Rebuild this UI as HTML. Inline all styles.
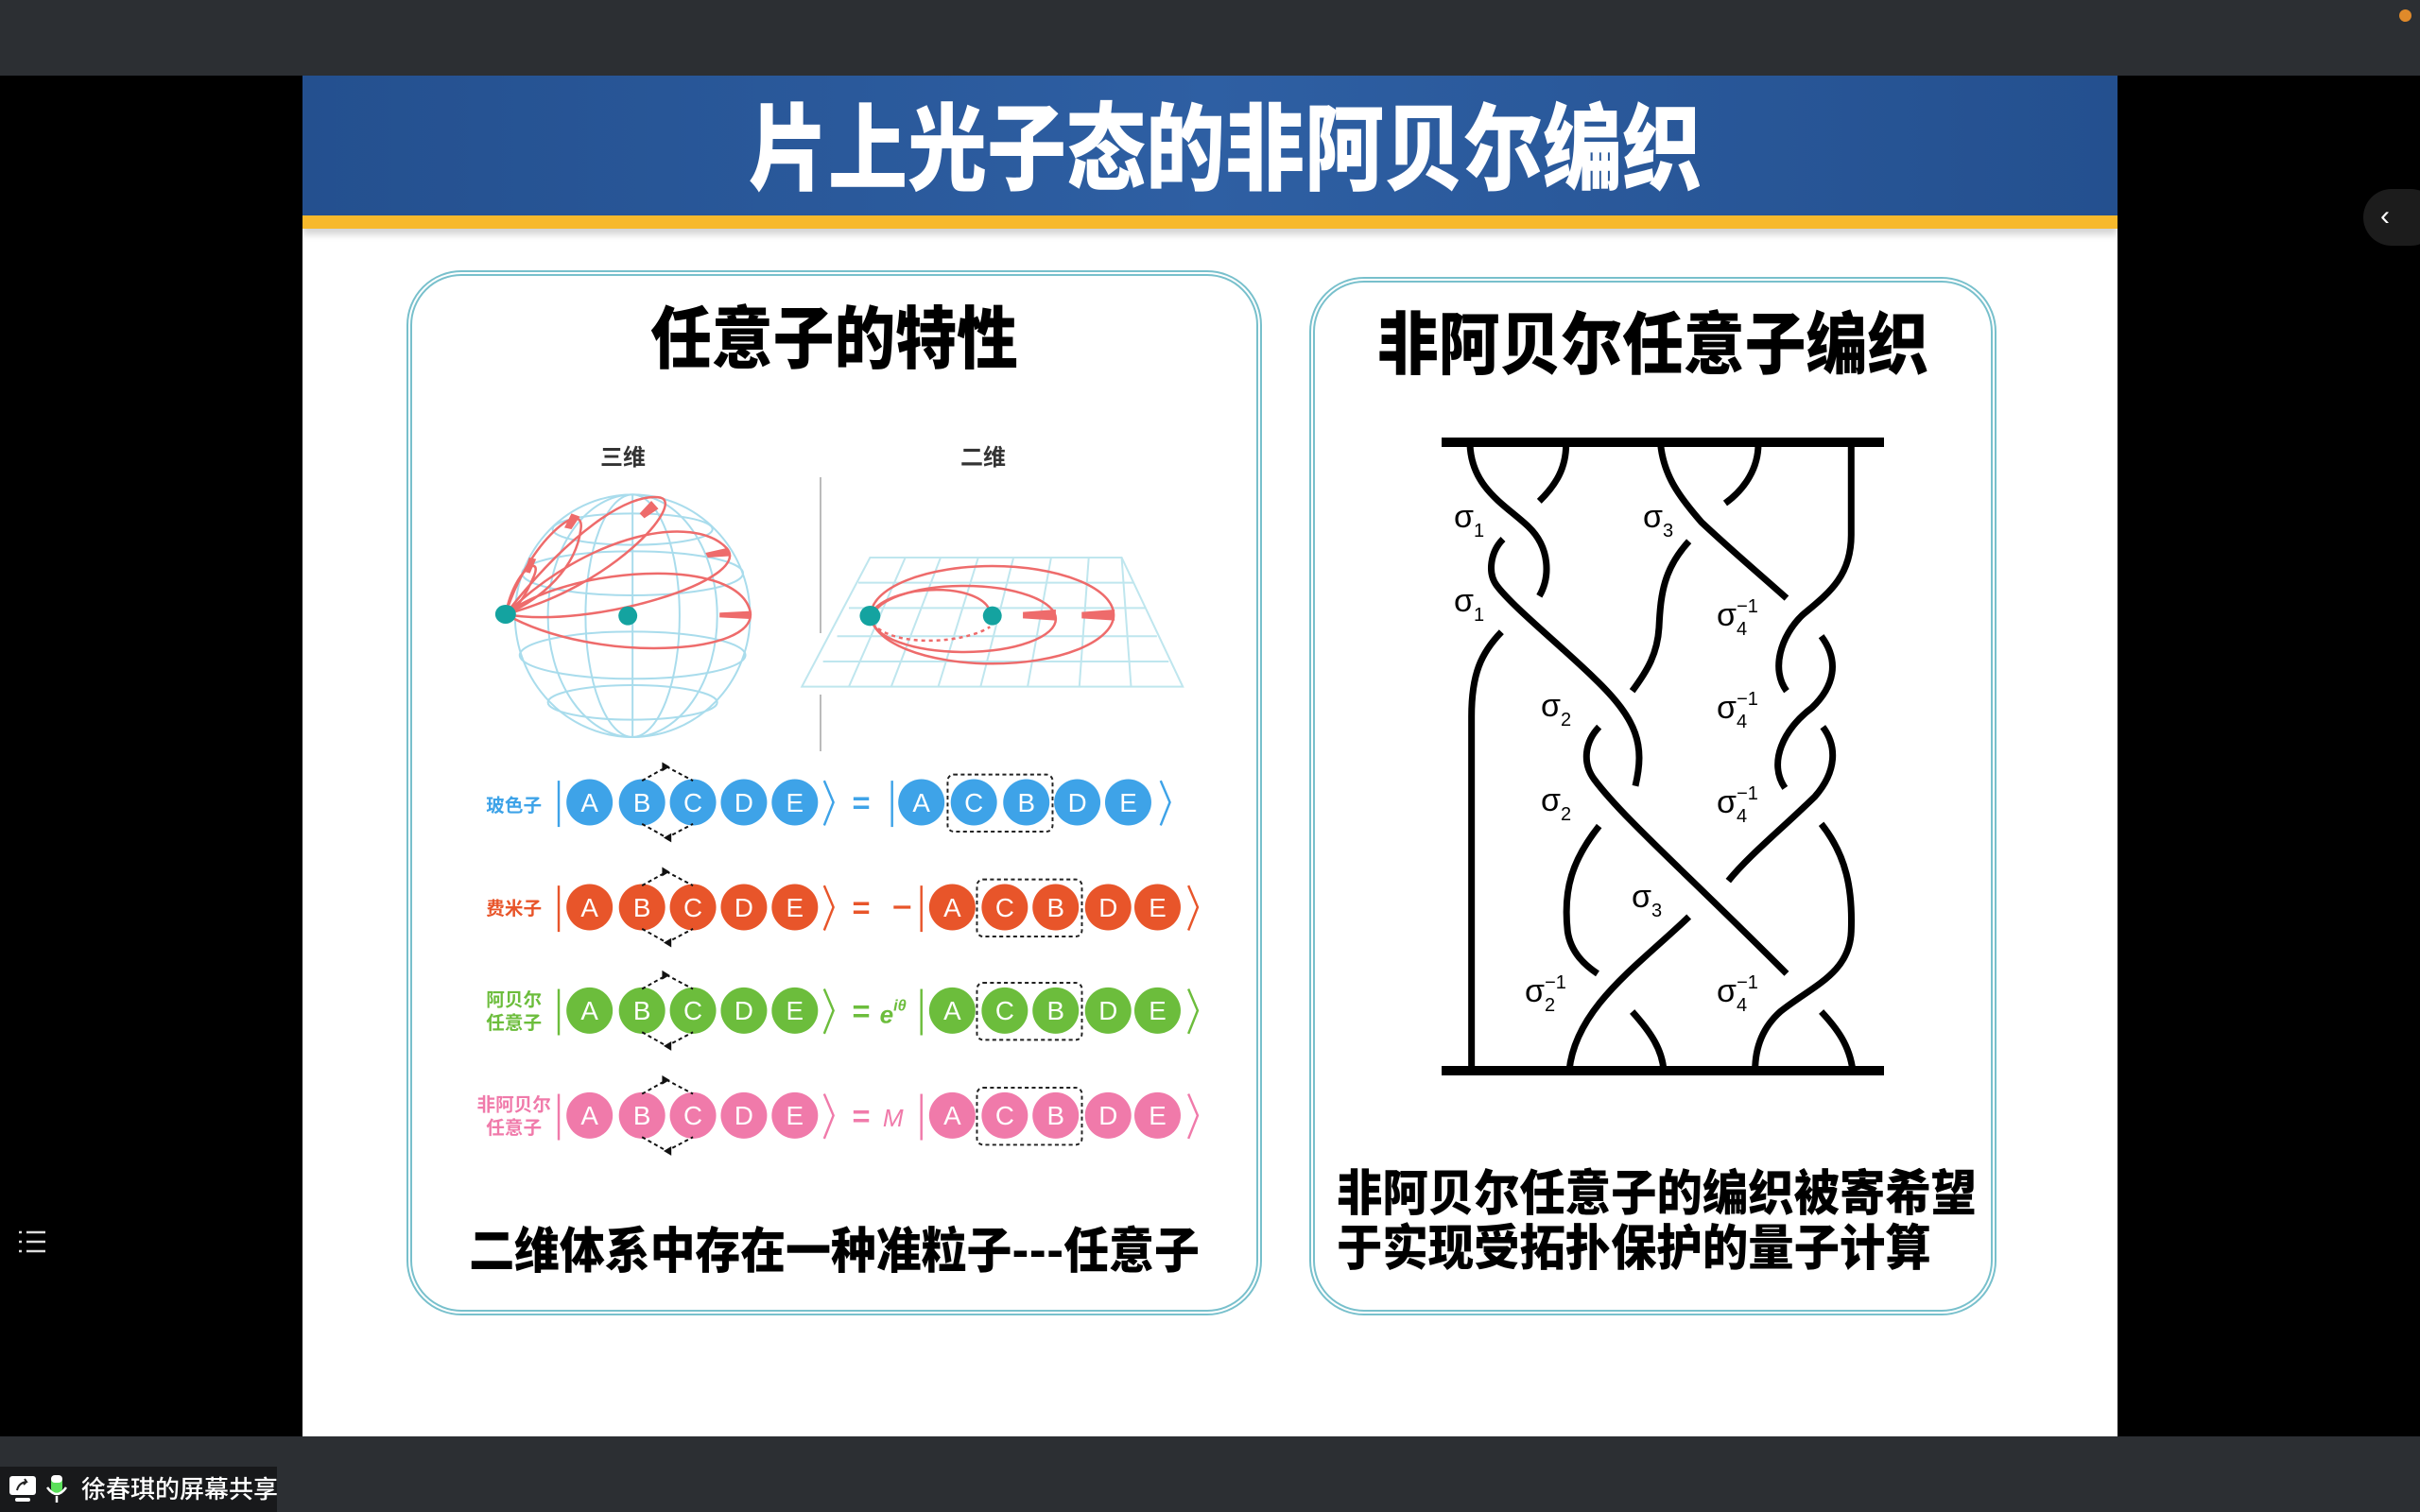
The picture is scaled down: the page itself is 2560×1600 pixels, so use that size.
<!DOCTYPE html>
<html><head><meta charset="utf-8"><style>
*{margin:0;padding:0;box-sizing:border-box}
body{width:2560px;height:1600px;overflow:hidden;background:#000;position:relative;font-family:"Liberation Sans","Noto Sans CJK SC",sans-serif}
.abs{position:absolute}
.cn{font-family:"Noto Sans CJK SC","WenQuanYi Zen Hei",sans-serif;font-weight:900}
</style></head><body>
<div class="abs" style="left:0;top:0;width:2560px;height:80px;background:#2c2f33"></div>
<div class="abs" style="left:2538px;top:10px;width:13px;height:13px;border-radius:50%;background:#e08a2a"></div>
<div class="abs" style="left:2500px;top:200px;width:80px;height:60px;border-radius:30px;background:#1c1c1c;color:#fff;font-size:30px;line-height:58px;padding-left:18px">‹</div>
<div class="abs" style="left:0;top:1520px;width:2560px;height:80px;background:#2c2f33"></div>
<div class="abs" style="left:0;top:1552px;width:293px;height:48px;background:#18191b"></div>
<div class="abs cn" style="left:86px;top:1557px;color:#fff;font-size:26px;font-weight:500;line-height:36px">徐春琪的屏幕共享</div>
<svg class="abs" style="left:0;top:1552px" width="80" height="48">
<rect x="10" y="10" width="28" height="20" rx="3" fill="#fff"/><rect x="16" y="33" width="16" height="4" rx="2" fill="#fff"/>
<path d="M18 25 Q20 17 28 16 L26 13 M28 16 L25 19" stroke="#222" stroke-width="2" fill="none"/>
<rect x="54" y="9" width="12" height="20" rx="6" fill="#5be05b"/><rect x="54" y="9" width="12" height="8" rx="4" fill="#fff"/>
<path d="M50 22 Q60 36 70 22 M60 31 V38" stroke="#fff" stroke-width="2.5" fill="none"/>
</svg>
<svg class="abs" style="left:16px;top:1298px" width="40" height="36"><g stroke="#ddd" stroke-width="2.5"><path d="M12 6h20M12 16h20M12 26h20"/><path d="M4 6h3M4 16h3M4 26h3"/></g></svg>

<div class="abs" style="left:320px;top:80px;width:1920px;height:1440px;background:#fff"></div>
<div class="abs" style="left:320px;top:80px;width:1920px;height:150px;background:linear-gradient(90deg,#24508f,#2e5fa3 50%,#24508f)"></div>
<div class="abs" style="left:320px;top:228px;width:1920px;height:14px;background:#f7b92c;box-shadow:0 6px 8px rgba(0,0,0,.18)"></div>
<div class="abs cn" style="left:336px;top:90px;width:1920px;text-align:center;color:#fff;font-size:100px;line-height:120px;transform:scaleX(.84)">片上光子态的非阿贝尔编织</div>

<div class="abs" style="left:430px;top:286px;width:905px;height:1106px;border:6px double #78c0cc;border-radius:58px"></div>
<div class="abs" style="left:1385px;top:293px;width:727px;height:1099px;border:6px double #78c0cc;border-radius:58px"></div>
<div class="abs cn" style="left:431px;top:308px;width:903px;text-align:center;font-size:72px;line-height:90px;color:#000;transform:scaleX(.9)">任意子的特性</div>
<div class="abs cn" style="left:1386px;top:314px;width:725px;text-align:center;font-size:72px;line-height:90px;color:#000;transform:scaleX(.9)">非阿贝尔任意子编织</div>
<div class="abs cn" style="left:431px;top:1288px;width:903px;text-align:center;font-size:52px;line-height:64px;color:#000;transform:scaleX(.92)">二维体系中存在一种准粒子---任意子</div>
<div class="abs cn" style="left:1414px;top:1230px;width:720px;font-size:52px;line-height:58px;color:#000;transform:scaleX(.93);transform-origin:0 0;white-space:nowrap">非阿贝尔任意子的编织被寄希望<br>于实现受拓扑保护的量子计算</div>

<svg class="abs" style="left:0;top:0" width="2560" height="1600" viewBox="0 0 2560 1600">
<text x="659" y="492" font-size="24" text-anchor="middle" fill="#333" font-family="Noto Sans CJK SC,sans-serif" font-weight="700">三维</text>
<text x="1040" y="492" font-size="24" text-anchor="middle" fill="#333" font-family="Noto Sans CJK SC,sans-serif" font-weight="700">二维</text>
<line x1="868" y1="505" x2="868" y2="670" stroke="#bbb" stroke-width="2"/>
<line x1="868" y1="735" x2="868" y2="795" stroke="#bbb" stroke-width="2"/>
<g transform="translate(500,460) scale(0.4975,0.3333)" fill="none">
 <g stroke="#a9dcec" stroke-width="2">
  <ellipse cx="340" cy="575" rx="250" ry="385" vector-effect="non-scaling-stroke"/>
  <ellipse cx="340" cy="575" rx="180" ry="385" vector-effect="non-scaling-stroke"/>
  <ellipse cx="340" cy="575" rx="100" ry="385" vector-effect="non-scaling-stroke"/>
  <line x1="340" y1="190" x2="340" y2="960" vector-effect="non-scaling-stroke"/>
  <ellipse cx="340" cy="300" rx="170" ry="50" vector-effect="non-scaling-stroke"/>
  <ellipse cx="340" cy="440" rx="235" ry="70" vector-effect="non-scaling-stroke"/>
  <ellipse cx="340" cy="700" rx="240" ry="75" vector-effect="non-scaling-stroke"/>
  <ellipse cx="340" cy="850" rx="180" ry="55" vector-effect="non-scaling-stroke"/>
 </g>
 <g stroke="#ee6b6b" stroke-width="2.5">
  <path d="M70 570 C90 420 150 380 130 450 C110 520 90 560 70 570" vector-effect="non-scaling-stroke"/>
  <path d="M70 570 C120 330 240 200 230 300 C220 420 150 520 70 570" vector-effect="non-scaling-stroke"/>
  <path d="M70 570 C200 320 330 180 400 200 C450 220 300 480 70 570" vector-effect="non-scaling-stroke"/>
  <path d="M70 570 C250 310 470 250 540 360 C600 460 250 620 70 570" vector-effect="non-scaling-stroke"/>
  <path d="M70 570 C200 420 560 380 590 560 C610 700 260 730 70 570" vector-effect="non-scaling-stroke"/>
 </g>
 <g fill="#ee6b6b"><path d="M380 210 L395 235 L365 265 L355 250 Z"/><path d="M210 250 L228 260 L210 300 L195 295 Z"/><path d="M540 360 L550 385 L500 390 L495 375Z"/><path d="M590 560 L590 585 L525 580 L525 565Z"/><path d="M120 390 L135 395 L122 440 L110 435Z"/></g>
 <ellipse cx="70" cy="570" rx="22" ry="30" fill="#14a3a0"/>
 <ellipse cx="330" cy="575" rx="20" ry="30" fill="#14a3a0"/>
 <g stroke="#bfe6ee" stroke-width="2">
  <path d="M845 390 H1380 L1510 800 H700 Z" vector-effect="non-scaling-stroke"/>
  <path d="M820 470H1405M800 550H1430M775 640H1455M745 720H1480" vector-effect="non-scaling-stroke"/>
  <path d="M920 390L800 800M995 390L890 800M1075 390L990 800M1150 390L1080 800M1230 390L1180 800M1310 390L1290 800M1380 390L1400 800" vector-effect="non-scaling-stroke"/>
 </g>
 <g stroke="#ee6b6b" stroke-width="2.5">
  <ellipse cx="1105" cy="572" rx="258" ry="155" vector-effect="non-scaling-stroke"/>
  <ellipse cx="1045" cy="585" rx="195" ry="105" vector-effect="non-scaling-stroke"/>
  <path d="M850 560 C900 470 1080 470 1100 560" vector-effect="non-scaling-stroke"/>
  <path d="M850 600 C900 680 1050 660 1100 610" stroke-dasharray="4 4" vector-effect="non-scaling-stroke"/>
 </g>
 <g fill="#ee6b6b"><path d="M1240 555V590L1170 583V563Z"/><path d="M1365 555V590L1295 583V563Z"/></g>
 <ellipse cx="845" cy="575" rx="22" ry="32" fill="#14a3a0"/>
 <ellipse cx="1105" cy="575" rx="20" ry="30" fill="#14a3a0"/>
</g>

<g transform="scale(1.63265)" font-family="Liberation Sans,sans-serif">
 <defs>
  <g id="arr" fill="none" stroke="#111" stroke-width="1.2" stroke-dasharray="2.5 2">
   <path d="M416 506 L432 497 L449 506"/><path d="M416 534 L432 543 L449 534"/>
  </g>
 </defs>
 <g fill="#3ea3e8" stroke="#3ea3e8">
  <text x="333" y="526" font-size="12" text-anchor="middle" stroke="none" font-family="Noto Sans CJK SC,sans-serif" font-weight="700">玻色子</text>
  <line x1="362" y1="506" x2="362" y2="536" stroke-width="1.5"/>
  <g stroke="none"><circle cx="382" cy="520" r="15"/><circle cx="416" cy="520" r="15"/><circle cx="449" cy="520" r="15"/><circle cx="482" cy="520" r="15"/><circle cx="515" cy="520" r="15"/>
  <circle cx="597" cy="520" r="15"/><circle cx="631" cy="520" r="15"/><circle cx="665" cy="520" r="15"/><circle cx="698" cy="520" r="15"/><circle cx="731" cy="520" r="15"/></g>
  <path d="M534 506 L540 520 L534 535" fill="none" stroke-width="1.5"/>
  <path d="M752 506 L758 520 L752 535" fill="none" stroke-width="1.5"/>
  <line x1="578" y1="506" x2="578" y2="536" stroke-width="1.5"/>
  <text x="558" y="527" font-size="20" text-anchor="middle" stroke="none" font-weight="700">=</text>
 </g>
 <g fill="#e8552a" stroke="#e8552a">
  <text x="333" y="593" font-size="12" text-anchor="middle" stroke="none" font-family="Noto Sans CJK SC,sans-serif" font-weight="700">费米子</text>
  <line x1="362" y1="574" x2="362" y2="604" stroke-width="1.5"/>
  <g stroke="none"><circle cx="382" cy="588" r="15"/><circle cx="416" cy="588" r="15"/><circle cx="449" cy="588" r="15"/><circle cx="482" cy="588" r="15"/><circle cx="515" cy="588" r="15"/>
  <circle cx="617" cy="588" r="15"/><circle cx="651" cy="588" r="15"/><circle cx="684" cy="588" r="15"/><circle cx="718" cy="588" r="15"/><circle cx="750" cy="588" r="15"/></g>
  <path d="M534 574 L540 588 L534 603" fill="none" stroke-width="1.5"/>
  <path d="M770 574 L776 588 L770 603" fill="none" stroke-width="1.5"/>
  <line x1="597" y1="574" x2="597" y2="604" stroke-width="1.5"/>
  <text x="558" y="595" font-size="20" text-anchor="middle" stroke="none" font-weight="700">=</text>
  <line x1="579" y1="588" x2="590" y2="588" stroke-width="2"/>
 </g>
 <g fill="#6cbd3c" stroke="#6cbd3c">
  <text x="333" y="652" font-size="12" text-anchor="middle" stroke="none" font-family="Noto Sans CJK SC,sans-serif" font-weight="700">阿贝尔</text>
  <text x="333" y="667" font-size="12" text-anchor="middle" stroke="none" font-family="Noto Sans CJK SC,sans-serif" font-weight="700">任意子</text>
  <line x1="362" y1="641" x2="362" y2="671" stroke-width="1.5"/>
  <g stroke="none"><circle cx="382" cy="655" r="15"/><circle cx="416" cy="655" r="15"/><circle cx="449" cy="655" r="15"/><circle cx="482" cy="655" r="15"/><circle cx="515" cy="655" r="15"/>
  <circle cx="617" cy="655" r="15"/><circle cx="651" cy="655" r="15"/><circle cx="684" cy="655" r="15"/><circle cx="718" cy="655" r="15"/><circle cx="750" cy="655" r="15"/></g>
  <path d="M534 641 L540 655 L534 670" fill="none" stroke-width="1.5"/>
  <path d="M770 641 L776 655 L770 670" fill="none" stroke-width="1.5"/>
  <line x1="597" y1="641" x2="597" y2="671" stroke-width="1.5"/>
  <text x="558" y="662" font-size="20" text-anchor="middle" stroke="none" font-weight="700">=</text>
  <text x="570" y="663" font-size="16" stroke="none" font-style="italic" font-weight="700">e<tspan font-size="10" dy="-8">iθ</tspan></text>
 </g>
 <g fill="#f07aaa" stroke="#f07aaa">
  <text x="333" y="720" font-size="12" text-anchor="middle" stroke="none" font-family="Noto Sans CJK SC,sans-serif" font-weight="700">非阿贝尔</text>
  <text x="333" y="735" font-size="12" text-anchor="middle" stroke="none" font-family="Noto Sans CJK SC,sans-serif" font-weight="700">任意子</text>
  <line x1="362" y1="709" x2="362" y2="739" stroke-width="1.5"/>
  <g stroke="none"><circle cx="382" cy="723" r="15"/><circle cx="416" cy="723" r="15"/><circle cx="449" cy="723" r="15"/><circle cx="482" cy="723" r="15"/><circle cx="515" cy="723" r="15"/>
  <circle cx="617" cy="723" r="15"/><circle cx="651" cy="723" r="15"/><circle cx="684" cy="723" r="15"/><circle cx="718" cy="723" r="15"/><circle cx="750" cy="723" r="15"/></g>
  <path d="M534 709 L540 723 L534 738" fill="none" stroke-width="1.5"/>
  <path d="M770 709 L776 723 L770 738" fill="none" stroke-width="1.5"/>
  <line x1="597" y1="709" x2="597" y2="739" stroke-width="1.5"/>
  <text x="558" y="730" font-size="20" text-anchor="middle" stroke="none" font-weight="700">=</text>
  <text x="572" y="730" font-size="16" stroke="none" font-style="italic">M</text>
 </g>
 <g fill="#fff" font-size="17" text-anchor="middle">
  <text x="382" y="526">A</text><text x="416" y="526">B</text><text x="449" y="526">C</text><text x="482" y="526">D</text><text x="515" y="526">E</text>
  <text x="597" y="526">A</text><text x="631" y="526">C</text><text x="665" y="526">B</text><text x="698" y="526">D</text><text x="731" y="526">E</text>
  <text x="382" y="594">A</text><text x="416" y="594">B</text><text x="449" y="594">C</text><text x="482" y="594">D</text><text x="515" y="594">E</text>
  <text x="617" y="594">A</text><text x="651" y="594">C</text><text x="684" y="594">B</text><text x="718" y="594">D</text><text x="750" y="594">E</text>
  <text x="382" y="661">A</text><text x="416" y="661">B</text><text x="449" y="661">C</text><text x="482" y="661">D</text><text x="515" y="661">E</text>
  <text x="617" y="661">A</text><text x="651" y="661">C</text><text x="684" y="661">B</text><text x="718" y="661">D</text><text x="750" y="661">E</text>
  <text x="382" y="729">A</text><text x="416" y="729">B</text><text x="449" y="729">C</text><text x="482" y="729">D</text><text x="515" y="729">E</text>
  <text x="617" y="729">A</text><text x="651" y="729">C</text><text x="684" y="729">B</text><text x="718" y="729">D</text><text x="750" y="729">E</text>
 </g>
 <use href="#arr"/><use href="#arr" y="68"/><use href="#arr" y="135"/><use href="#arr" y="203"/>
 <g fill="#111"><path d="M434 497l-5 -3v6z"/><path d="M430 543l5 -3v6z"/><path d="M434 565l-5 -3v6z"/><path d="M430 611l5 -3v6z"/><path d="M434 632l-5 -3v6z"/><path d="M430 678l5 -3v6z"/><path d="M434 700l-5 -3v6z"/><path d="M430 746l5 -3v6z"/></g>
 <g fill="none" stroke="#222" stroke-width="1.2" stroke-dasharray="2.5 2">
  <rect x="614" y="502" width="68" height="37" rx="4"/>
  <rect x="633" y="570" width="68" height="37" rx="4"/>
  <rect x="633" y="637" width="68" height="37" rx="4"/>
  <rect x="633" y="705" width="68" height="37" rx="4"/>
 </g>
</g>

<rect x="1525" y="463" width="468" height="10" fill="#000"/>
<rect x="1525" y="1128" width="468" height="10" fill="#000"/>
<g transform="translate(1500,450) scale(0.3333,0.4464)" fill="none" stroke="#000" stroke-width="7" stroke-linecap="butt">
 <path vector-effect="non-scaling-stroke" d="M170,1530 L170,690 C170,590 200,540 265,490"/>
 <path vector-effect="non-scaling-stroke" d="M165,45 C170,150 280,190 350,240 C420,290 420,360 385,405"/>
 <path vector-effect="non-scaling-stroke" d="M470,45 C470,100 440,140 385,180"/>
 <path vector-effect="non-scaling-stroke" d="M270,270 C230,300 220,350 250,380 C300,430 450,520 560,600 C700,700 720,760 690,855"/>
 <path vector-effect="non-scaling-stroke" d="M575,715 C530,750 520,800 560,840 C650,930 850,1060 1170,1300"/>
 <path vector-effect="non-scaling-stroke" d="M575,950 C490,1030 460,1100 475,1200 C485,1250 530,1280 570,1300"/>
 <path vector-effect="non-scaling-stroke" d="M860,1165 C700,1280 500,1380 480,1530"/>
 <path vector-effect="non-scaling-stroke" d="M680,1390 C740,1440 775,1480 780,1530"/>
 <path vector-effect="non-scaling-stroke" d="M770,45 C780,120 830,170 900,230 C1000,300 1080,350 1170,410"/>
 <path vector-effect="non-scaling-stroke" d="M1080,45 C1080,100 1040,150 975,185"/>
 <path vector-effect="non-scaling-stroke" d="M860,275 C780,340 770,400 765,480 C760,540 730,580 680,630"/>
 <path vector-effect="non-scaling-stroke" d="M1375,45 L1375,260 C1375,360 1300,400 1220,450 C1150,500 1120,580 1170,630"/>
 <path vector-effect="non-scaling-stroke" d="M1280,500 C1340,560 1320,620 1250,670 C1160,720 1110,800 1165,860"/>
 <path vector-effect="non-scaling-stroke" d="M1285,715 C1330,760 1330,820 1260,880 C1150,960 1050,1020 985,1080"/>
 <path vector-effect="non-scaling-stroke" d="M1280,945 C1360,1020 1380,1100 1375,1200 C1370,1300 1250,1330 1150,1390 C1090,1430 1070,1480 1070,1530"/>
 <path vector-effect="non-scaling-stroke" d="M1280,1390 C1330,1430 1370,1470 1380,1530"/>
</g>
<g font-family="Liberation Sans,sans-serif" font-size="34" fill="#000">
 <text x="1538" y="558">σ<tspan font-size="20" dy="10">1</tspan></text>
 <text x="1538" y="647">σ<tspan font-size="20" dy="10">1</tspan></text>
 <text x="1738" y="558">σ<tspan font-size="20" dy="10">3</tspan></text>
 <text x="1816" y="662">σ<tspan font-size="20" dy="10">4</tspan><tspan font-size="20" dx="-11" dy="-24">−1</tspan></text>
 <text x="1816" y="760">σ<tspan font-size="20" dy="10">4</tspan><tspan font-size="20" dx="-11" dy="-24">−1</tspan></text>
 <text x="1816" y="860">σ<tspan font-size="20" dy="10">4</tspan><tspan font-size="20" dx="-11" dy="-24">−1</tspan></text>
 <text x="1630" y="758">σ<tspan font-size="20" dy="10">2</tspan></text>
 <text x="1630" y="858">σ<tspan font-size="20" dy="10">2</tspan></text>
 <text x="1726" y="960">σ<tspan font-size="20" dy="10">3</tspan></text>
 <text x="1613" y="1060">σ<tspan font-size="20" dy="10">2</tspan><tspan font-size="20" dx="-11" dy="-24">−1</tspan></text>
 <text x="1816" y="1060">σ<tspan font-size="20" dy="10">4</tspan><tspan font-size="20" dx="-11" dy="-24">−1</tspan></text>
</g>
</svg>
</body></html>
